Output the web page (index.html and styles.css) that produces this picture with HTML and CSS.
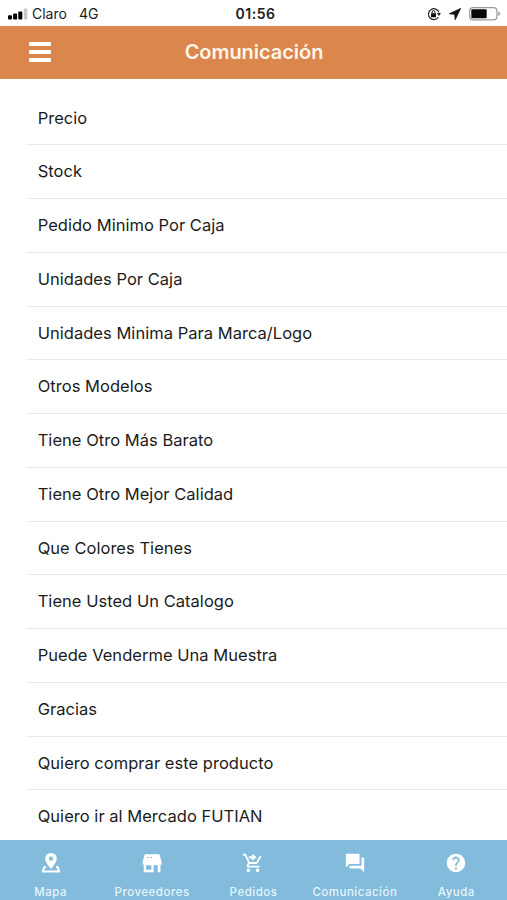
FILE: index.html
```html
<!DOCTYPE html>
<html lang="es">
<head>
  <meta charset="UTF-8">
  <title>Comunicación</title>
  <meta name="viewport" content="width=device-width, initial-scale=1.0">
  <link rel="stylesheet" href="styles.css">
</head>
<body>

<div class="app">

  <!-- Status bar -->
  <div class="status-bar">
    <div class="status-left">
      <svg class="signal" width="20" height="12" viewBox="0 0 20 12">
        <rect x="0" y="7.2" width="4" height="4.4" rx="1"/>
        <rect x="5.1" y="5.6" width="4" height="6" rx="1"/>
        <rect x="10.3" y="3.6" width="4" height="8" rx="1"/>
        <rect x="15.8" y="0.6" width="3.6" height="11" rx="1" fill="#c8c8c8"/>
      </svg>
      <span class="carrier">Claro</span>
      <span class="network">4G</span>
    </div>
    <div class="clock">01:56</div>
    <div class="status-right">
      <svg width="14" height="14" viewBox="0 0 14 14">
        <path d="M11.2 10.4A5.4 5.4 0 1 1 12 5.4" fill="none" stroke="#222" stroke-width="1.2"/>
        <path d="M9.8 6h4.2l-2.1 3z" fill="#222"/>
        <rect x="4" y="6.3" width="5" height="3.9" rx="0.5" fill="#111"/>
        <path d="M5.1 6.5V5a1.4 1.4 0 0 1 2.8 0v1.5" fill="none" stroke="#111" stroke-width="1"/>
      </svg>
      <svg width="12" height="12" viewBox="0 0 12 12">
        <path d="M11.6 0.4L0.3 5.8l5.4 0.5 0.5 5.4z" fill="#111" stroke="#111" stroke-width="0.8" stroke-linejoin="round"/>
      </svg>
      <svg width="32" height="14" viewBox="0 0 32 14">
        <rect x="0.7" y="0.7" width="27.2" height="12.2" rx="3.4" fill="none" stroke="#999" stroke-width="1.2"/>
        <rect x="2.3" y="2.3" width="15.4" height="9" rx="1" fill="#080808"/>
        <path d="M29.3 4.6q1.9 0.8 1.9 2.2t-1.9 2.2z" fill="#999"/>
      </svg>
    </div>
  </div>

  <!-- Header -->
  <header class="header">
    <button class="menu-button" aria-label="Menú">
      <span></span>
      <span></span>
      <span></span>
    </button>
    <h1>Comunicación</h1>
  </header>

  <!-- Phrases -->
  <ul class="phrases">
    <li>Precio</li>
    <li>Stock</li>
    <li>Pedido Minimo Por Caja</li>
    <li>Unidades Por Caja</li>
    <li>Unidades Minima Para Marca/Logo</li>
    <li>Otros Modelos</li>
    <li>Tiene Otro Más Barato</li>
    <li>Tiene Otro Mejor Calidad</li>
    <li>Que Colores Tienes</li>
    <li>Tiene Usted Un Catalogo</li>
    <li>Puede Venderme Una Muestra</li>
    <li>Gracias</li>
    <li>Quiero comprar este producto</li>
    <li>Quiero ir al Mercado FUTIAN</li>
  </ul>

  <!-- Tabs -->
  <nav class="tabs">
    <a class="tab">
      <svg viewBox="0 0 24 24">
        <path fill-rule="evenodd" d="M12 1a6.300 6.300 0 0 0-6.300 6.300C5.700 11.800 12 18.300 12 18.300s6.300-6.500 6.300-11A6.300 6.300 0 0 0 12 1zm0 4a2.300 2.300 0 1 1 0 4.600 2.300 2.300 0 0 1 0-4.600z"/>
        <path d="M6.600 16.300H4.800L3 21.300H21L19.200 16.300H17.400" fill="none" stroke="#fff" stroke-width="2.200" stroke-linejoin="round"/>
      </svg>
      <span>Mapa</span>
    </a>
    <a class="tab">
      <svg viewBox="0 0 24 24">
        <path fill-rule="evenodd" d="M4 2.500h16.200L22.500 11v2.500h-1.300V22h-3v-7.500h-4.400V22H3v-8.500H1.800V11zM5.500 14.500v4.800h5.800v-4.800z"/>
        <path d="M6.500 6h1.800M10 6h1.800" stroke="#82bbdb" stroke-width="1.300"/>
      </svg>
      <span>Proveedores</span>
    </a>
    <a class="tab">
      <svg viewBox="0 0 24 24">
        <path d="M11 9V7H7.500V4.600H11V2l5 3.800L11 9.800zM7 18c-1.100 0-1.990.900-1.990 2S5.900 22 7 22s2-.900 2-2-.900-2-2-2zm10 0c-1.100 0-1.990.900-1.990 2s.890 2 1.990 2 2-.900 2-2-.900-2-2-2zm-9.830-3.250l.030-.120.900-1.630h7.450c.750 0 1.410-.410 1.750-1.030L21.160 4.960 19.420 4h-.010l-1.100 2-2.760 5H8.530l-.130-.270L6.160 6l-.950-2-.940-2H1v2h2l3.600 7.590-1.350 2.450c-.160.280-.250.610-.250.960 0 1.100.900 2 2 2h12v-2H7.420c-.130 0-.250-.110-.250-.250z"/>
      </svg>
      <span>Pedidos</span>
    </a>
    <a class="tab">
      <svg viewBox="0 0 24 24">
        <path d="M21 6h-2v9H6v2c0 .550.450 1 1 1h11l4 4V7c0-.550-.450-1-1-1zm-4 6V3c0-.550-.450-1-1-1H3c-.550 0-1 .450-1 1v14l4-4h10c.550 0 1-.450 1-1z"/>
      </svg>
      <span>Comunicación</span>
    </a>
    <a class="tab">
      <svg viewBox="0 0 24 24">
        <path d="M12 2C6.480 2 2 6.480 2 12s4.480 10 10 10 10-4.480 10-10S17.520 2 12 2zm1 17h-2v-2h2v2zm2.070-7.750l-.900.920C13.450 12.900 13 13.500 13 15h-2v-.500c0-1.100.450-2.100 1.170-2.830l1.240-1.260c.370-.360.590-.860.590-1.410 0-1.100-.900-2-2-2s-2 .900-2 2H8c0-2.210 1.790-4 4-4s4 1.790 4 4c0 .880-.360 1.680-.930 2.250z"/>
      </svg>
      <span>Ayuda</span>
    </a>
  </nav>

</div>

</body>
</html>
```
FILE: styles.css
```css
* {
  box-sizing: border-box;
}

body {
  margin: 0;
  font-family: Inter, "Liberation Sans", sans-serif;
  background-color: #fff;
  color: #1c1c1c;
}

.app {
  display: flex;
  flex-direction: column;
  height: 900px;
  overflow: hidden;
}

.status-bar {
  display: grid;
  grid-template-columns: 1fr auto 1fr;
  align-items: center;
  flex: none;
  height: 25.5px;
  padding: 2px 6px 0 8px;
  font-size: 14px;
}

.status-left,
.status-right {
  display: flex;
  align-items: center;
}

.status-right {
  justify-content: flex-end;
  gap: 8px;
}

.carrier {
  margin-left: 4px;
}

.network {
  margin-left: 12px;
}

.clock {
  padding-left: 2px;
  font-weight: 600;
  letter-spacing: 0.5px;
}

.header {
  display: grid;
  grid-template-columns: 1fr auto 1fr;
  align-items: center;
  flex: none;
  height: 53.5px;
  padding: 0 28px;
  background-color: #da864c;
  color: #fff5ea;
}

.header h1 {
  margin: 0;
  padding-left: 1px;
  font-size: 20px;
  font-weight: 600;
  letter-spacing: -0.05px;
}

.menu-button {
  display: flex;
  flex-direction: column;
  gap: 4px;
  width: 24px;
  padding: 0 1px;
  border: none;
  background: none;
}

.menu-button span {
  height: 4px;
  border-radius: 1px;
  background-color: #fff;
}

.phrases {
  flex: 1;
  min-height: 0;
  margin: 0;
  padding: 12.7px 0 0 26px;
  list-style: none;
  overflow: hidden;
}

.phrases li {
  height: 53.75px;
  padding-left: 11.7px;
  border-bottom: 1px solid #e9e9e9;
  font-size: 16.5px;
  line-height: 52.4px;
  letter-spacing: 0.03px;
}

.tabs {
  display: grid;
  grid-template-columns: repeat(5, 1fr);
  flex: none;
  height: 60px;
  background-color: #82bbdb;
}

.tab {
  display: flex;
  flex-direction: column;
  align-items: center;
  padding-top: 12px;
  color: #e6f5fc;
  font-size: 11.5px;
  font-weight: 500;
  letter-spacing: 0.5px;
}

.tab svg {
  width: 22px;
  height: 22px;
  margin-bottom: 11px;
  fill: #fff;
}
```
